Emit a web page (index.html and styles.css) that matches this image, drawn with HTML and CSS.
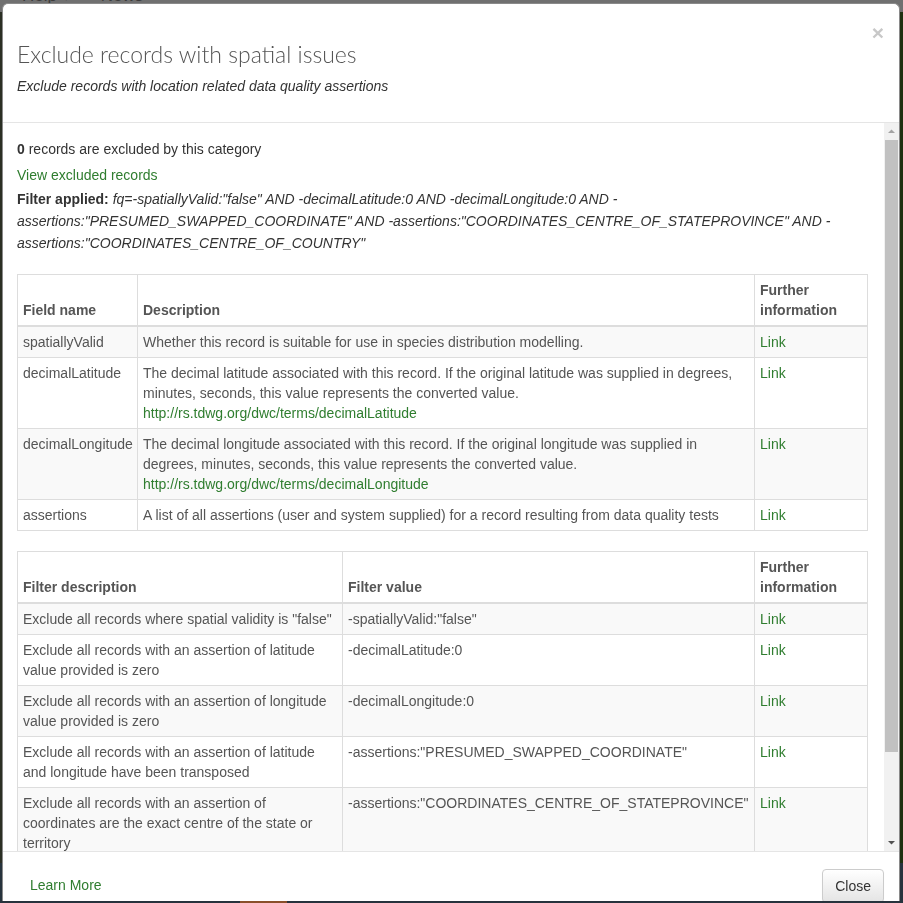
FILE: index.html
```html
<!DOCTYPE html>
<html>
<head>
<meta charset="utf-8">
<link rel="stylesheet" href="styles.css">
</head>
<body>
<div class="page">
  <div class="nav"><span class="nav-item">Help ▾</span><span class="nav-item">News</span></div>
  <div class="main"></div>
  <div class="foot"><span class="foot-block"></span></div>
</div>

<div class="modal">
  <div class="modal-header">
    <div class="head-text">
      <h3 class="modal-title">Exclude records with spatial issues</h3>
      <p class="modal-sub">Exclude records with location related data quality assertions</p>
    </div>
    <button class="close" type="button">×</button>
  </div>

  <div class="modal-bodywrap">
    <div class="modal-body">
      <p class="count"><b>0</b> records are excluded by this category</p>
      <p class="view"><a href="#">View excluded records</a></p>
      <p class="filter"><b>Filter applied:</b> <i>fq=-spatiallyValid:"false" AND -decimalLatitude:0 AND -decimalLongitude:0 AND -assertions:"PRESUMED_SWAPPED_COORDINATE" AND -assertions:"COORDINATES_CENTRE_OF_STATEPROVINCE" AND -assertions:"COORDINATES_CENTRE_OF_COUNTRY"</i></p>

      <table class="tbl tbl-fields">
        <colgroup><col class="c-a"><col class="c-b"><col class="c-c"></colgroup>
        <thead>
          <tr><th>Field name</th><th>Description</th><th>Further information</th></tr>
        </thead>
        <tbody>
          <tr><td>spatiallyValid</td><td>Whether this record is suitable for use in species distribution modelling.</td><td><a href="#">Link</a></td></tr>
          <tr><td>decimalLatitude</td><td>The decimal latitude associated with this record. If the original latitude was supplied in degrees, minutes, seconds, this value represents the converted value.<br><a href="#">http://rs.tdwg.org/dwc/terms/decimalLatitude</a></td><td><a href="#">Link</a></td></tr>
          <tr><td>decimalLongitude</td><td>The decimal longitude associated with this record. If the original longitude was supplied in degrees, minutes, seconds, this value represents the converted value.<br><a href="#">http://rs.tdwg.org/dwc/terms/decimalLongitude</a></td><td><a href="#">Link</a></td></tr>
          <tr><td>assertions</td><td>A list of all assertions (user and system supplied) for a record resulting from data quality tests</td><td><a href="#">Link</a></td></tr>
        </tbody>
      </table>

      <table class="tbl tbl-filters">
        <colgroup><col class="d-a"><col class="d-b"><col class="d-c"></colgroup>
        <thead>
          <tr><th>Filter description</th><th>Filter value</th><th>Further information</th></tr>
        </thead>
        <tbody>
          <tr><td>Exclude all records where spatial validity is "false"</td><td>-spatiallyValid:"false"</td><td><a href="#">Link</a></td></tr>
          <tr><td>Exclude all records with an assertion of latitude value provided is zero</td><td>-decimalLatitude:0</td><td><a href="#">Link</a></td></tr>
          <tr><td>Exclude all records with an assertion of longitude value provided is zero</td><td>-decimalLongitude:0</td><td><a href="#">Link</a></td></tr>
          <tr><td>Exclude all records with an assertion of latitude and longitude have been transposed</td><td>-assertions:"PRESUMED_SWAPPED_COORDINATE"</td><td><a href="#">Link</a></td></tr>
          <tr><td>Exclude all records with an assertion of coordinates are the exact centre of the state or territory</td><td>-assertions:"COORDINATES_CENTRE_OF_STATEPROVINCE"</td><td><a href="#">Link</a></td></tr>
          <tr><td>Exclude all records with an assertion of coordinates are the exact centre of the country</td><td>-assertions:"COORDINATES_CENTRE_OF_COUNTRY"</td><td><a href="#">Link</a></td></tr>
        </tbody>
      </table>
    </div>
    <div class="scrollbar">
      <span class="sb-btn"><svg width="15" height="17" viewBox="0 0 15 17"><path d="M4 10 L7.5 6.5 L11 10 Z" fill="#a3a3a3"/></svg></span>
      <span class="sb-track"><span class="sb-thumb"></span></span>
      <span class="sb-btn"><svg width="15" height="17" viewBox="0 0 15 17"><path d="M4 7 L7.5 10.5 L11 7 Z" fill="#505050"/></svg></span>
    </div>
  </div>

  <div class="modal-footer">
    <a class="btn-link" href="#">Learn More</a>
    <button class="btn" type="button">Close</button>
  </div>
</div>
</body>
</html>
```

FILE: styles.css
```css
html, body {
  margin: 0;
  padding: 0;
  height: 100%;
  overflow: hidden;
}
body {
  font-family: "Liberation Sans", Arial, sans-serif;
  font-size: 14px;
  line-height: 20px;
  color: #333;
  background: #262626;
}
.page {
  display: flex;
  flex-direction: column;
  height: 903px;
}
.nav {
  height: 12px;
  background: #707070;
  display: flex;
  gap: 30px;
  padding-left: 22px;
  overflow: hidden;
}
.nav-item {
  margin-top: -14px;
  font-size: 17px;
  line-height: 20px;
  color: #3c3c3c;
}
.main {
  flex: 1;
  background: linear-gradient(90deg, #2b2f24 0, #2b2f24 50%, #1e3110 100%);
}
.foot {
  height: 40px;
  background: #27333d;
  padding-left: 240px;
}
.foot-block {
  display: block;
  width: 47px;
  height: 40px;
  background: #8a4f2a;
}

.modal {
  position: fixed;
  left: 2px;
  top: 3px;
  width: 896px;
  height: 897px;
  background: #fff;
  border: 1px solid #8a8a8a;
  border-bottom: none;
  border-radius: 6px 6px 0 0;
  display: flex;
  flex-direction: column;
  overflow: hidden;
}

.modal-header {
  flex: none;
  display: flex;
  align-items: flex-start;
  padding: 15px 14px 26px 14px;
  border-bottom: 1px solid #e5e5e5;
}
.head-text {
  flex: 1;
  padding-top: 20px;
}
.modal-title {
  margin: 0;
  font-family: "Lato", "Open Sans", sans-serif;
  font-weight: 300;
  font-size: 23px;
  line-height: 30px;
  color: #555;
}
.modal-sub {
  margin: 7px 0 0;
  font-style: italic;
  font-size: 14px;
  line-height: 20px;
  color: #333;
}
.close {
  border: 0;
  background: none;
  padding: 0;
  margin: 3px 1px 0 0;
  font-family: "Liberation Sans", Arial, sans-serif;
  font-size: 21px;
  font-weight: bold;
  line-height: 21px;
  color: #c8c8c8;
  cursor: pointer;
}

.modal-bodywrap {
  flex: 1;
  display: flex;
  min-height: 0;
  border-bottom: 1px solid #e5e5e5;
}
.modal-body {
  flex: 1;
  overflow: hidden;
  padding: 16px 17px 0 14px;
}
.count {
  margin: 0 0 6px;
}
.view {
  margin: 0 0 3px;
}
.filter {
  margin: 0 0 20px;
  line-height: 22px;
  color: #333;
}
a {
  color: #2f7d2f;
  text-decoration: none;
}

.tbl {
  width: 850px;
  table-layout: fixed;
  border-collapse: collapse;
  border-spacing: 0;
  border: 1px solid #ddd;
  margin-bottom: 20px;
  color: #555;
}
.tbl th, .tbl td {
  border: 1px solid #ddd;
  padding: 5px;
  text-align: left;
  vertical-align: top;
  line-height: 20px;
}
.tbl th {
  vertical-align: bottom;
  border-bottom: 2px solid #ddd;
  font-weight: bold;
}
.tbl tbody tr:nth-child(odd) td {
  background: #f9f9f9;
}
.c-a { width: 120px; }
.c-b { width: 617px; }
.c-c { width: 113px; }
.d-a { width: 325px; }
.d-b { width: 412px; }
.d-c { width: 113px; }

.scrollbar {
  width: 15px;
  flex: none;
  background: #f1f1f1;
  display: flex;
  flex-direction: column;
}
.sb-btn {
  height: 17px;
  display: block;
}
.sb-btn svg { display: block; }
.sb-track {
  flex: 1;
  display: flex;
  flex-direction: column;
  padding: 0 1px;
}
.sb-thumb {
  display: block;
  height: 612px;
  background: #c1c1c1;
}

.modal-footer {
  flex: none;
  box-sizing: border-box;
  height: 49px;
  padding: 17px 15px 0 15px;
  display: flex;
  justify-content: space-between;
  align-items: flex-start;
}
.btn-link {
  display: inline-block;
  padding: 6px 12px;
  font-size: 14px;
  line-height: 20px;
  color: #2f7d2f;
}
.btn {
  font-family: "Liberation Sans", Arial, sans-serif;
  font-size: 14px;
  line-height: 20px;
  padding: 6px 12px;
  color: #333;
  border: 1px solid #ccc;
  border-radius: 4px;
  background: linear-gradient(#ffffff, #e4e4e4);
  box-shadow: inset 0 1px 0 rgba(255,255,255,.15), 0 1px 1px rgba(0,0,0,.075);
}
```
